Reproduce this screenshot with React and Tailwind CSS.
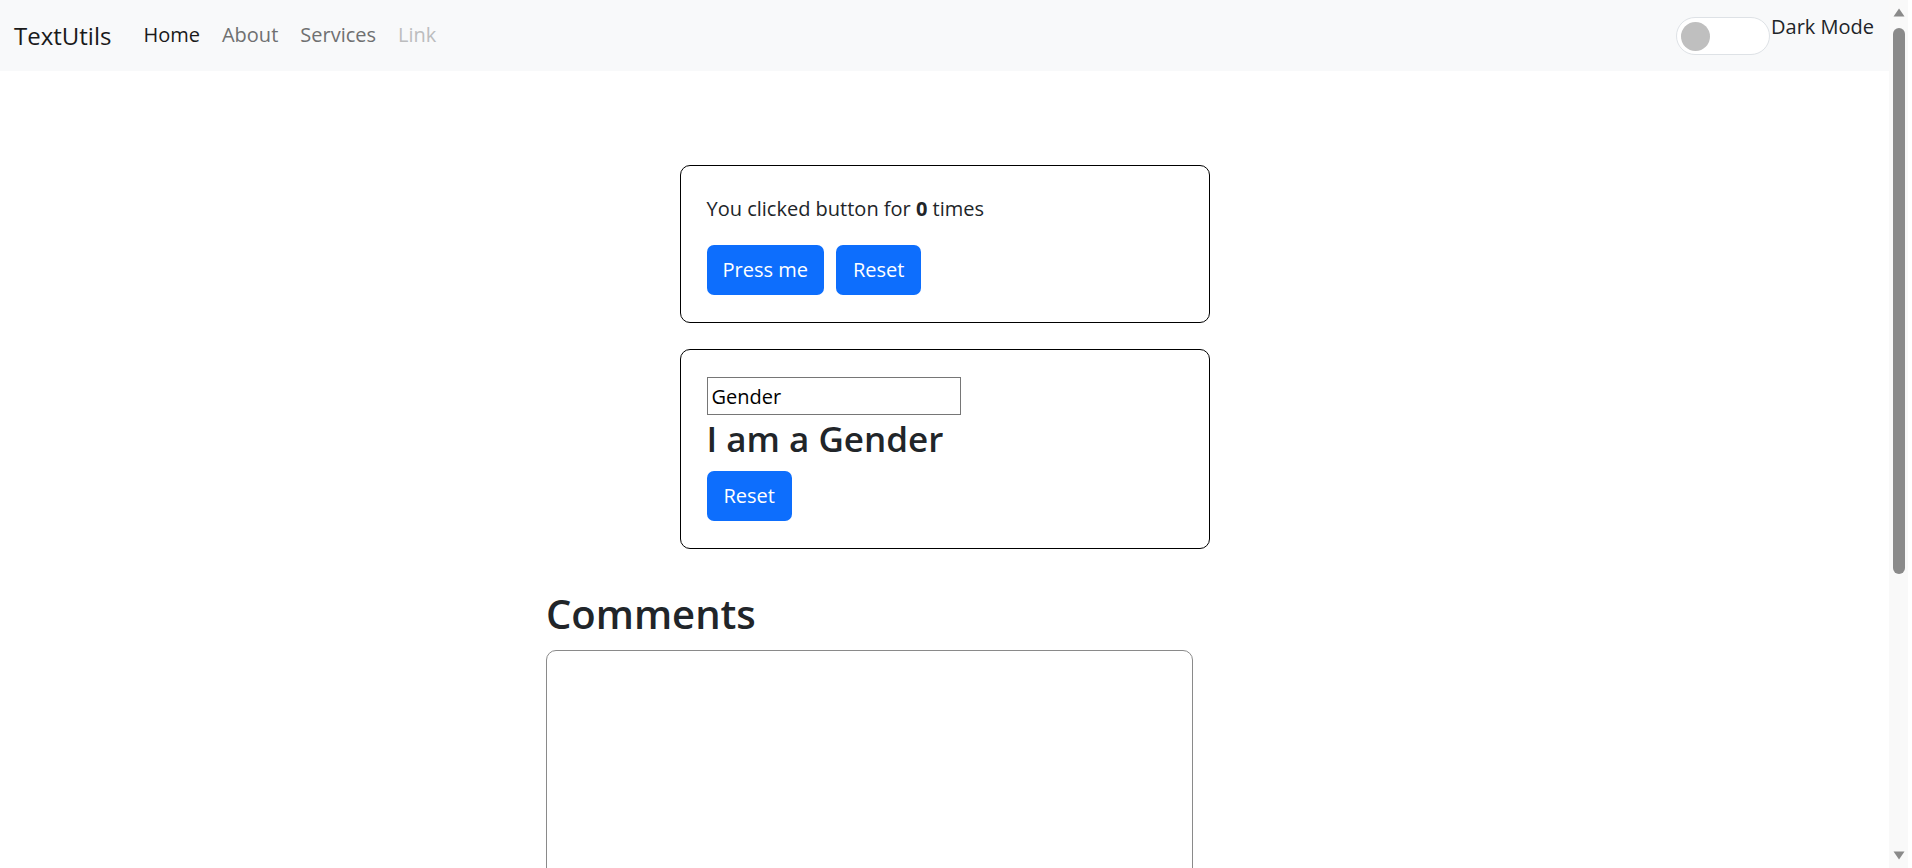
export default function App() {
  return (
    <div className="flex h-screen overflow-hidden bg-white text-[#212529]" style={{ fontFamily: '"Open Sans", "Noto Sans", sans-serif' }}>
      <div className="flex-1 min-w-0">
        <nav className="h-[71px] bg-[#f8f9fa] flex items-start pl-[14px] pr-[15px]">
          <a className="mt-[18px] text-[24px] leading-[35px] text-[#1a1a1a]">TextUtils</a>
          <ul className="flex mt-[20px] ml-[32px] gap-[22px] text-[20px] leading-[30px]">
            <li className="text-[#1a1a1a]">Home</li>
            <li className="text-[#6f7071]">About</li>
            <li className="text-[#6f7071]">Services</li>
            <li className="text-[#bcbdbe]">Link</li>
          </ul>
          <div className="ml-auto flex items-start">
            <div className="mt-[17px] w-[94px] h-[38px] rounded-full border border-[#dee2e6] bg-white flex items-center pl-[4px]">
              <div className="w-[29px] h-[29px] rounded-full bg-[#bfbfbf]" />
            </div>
            <span className="mt-[12px] ml-[1px] text-[20px] leading-[30px] text-[#212529]">Dark Mode</span>
          </div>
        </nav>

        <div className="w-[530px] mx-auto mt-[94px] border border-black rounded-[10px] px-[26px] pt-[28px] pb-[27px]">
          <p className="text-[20px] leading-[30px] mb-[21px]">
            You clicked button for <b className="font-bold">0</b> times
          </p>
          <div className="flex gap-[12px]">
            <button className="h-[50px] px-[16px] rounded-[7px] bg-[#0d6efd] text-white text-[20px] leading-[30px]">Press me</button>
            <button className="h-[50px] px-[17px] rounded-[7px] bg-[#0d6efd] text-white text-[20px] leading-[30px]">Reset</button>
          </div>
        </div>

        <div className="w-[530px] mx-auto mt-[26px] border border-black rounded-[10px] px-[26px] pt-[27px] pb-[27px]">
          <input
            readOnly
            value="Gender"
            className="block w-[254px] h-[38px] border border-[#767676] px-[4px] text-[20px] text-black outline-none"
          />
          <h3 className="mt-[3px] mb-[11px] text-[35px] leading-[42px] font-semibold">I am a Gender</h3>
          <button className="h-[50px] px-[17px] rounded-[7px] bg-[#0d6efd] text-white text-[20px] leading-[30px]">Reset</button>
        </div>

        <div className="ml-[546px] mt-[41px] w-[647px]">
          <h2 className="text-[40px] leading-[48px] font-semibold mb-[12px]">Comments</h2>
          <textarea className="block w-[647px] h-[580px] border border-[#8a8a8a] rounded-[10px] outline-none resize-none" />
        </div>
      </div>

      <div className="w-[23px] shrink-0 bg-[#f9f9f9] border-r-[4px] border-white flex flex-col pl-[4px] pt-[8px] pb-[8px]">
        <svg width="12" height="9" viewBox="0 0 12 9" className="block">
          <path d="M6 0.5 L11.5 8.5 L0.5 8.5 Z" fill="#8a8a8a" />
        </svg>
        <div className="mt-[11px] w-[12px] h-[546px] rounded-full bg-[#8a8a8a]" />
        <div className="flex-1" />
        <svg width="12" height="9" viewBox="0 0 12 9" className="block">
          <path d="M0.5 0.5 L11.5 0.5 L6 8.5 Z" fill="#8a8a8a" />
        </svg>
      </div>
    </div>
  );
}
